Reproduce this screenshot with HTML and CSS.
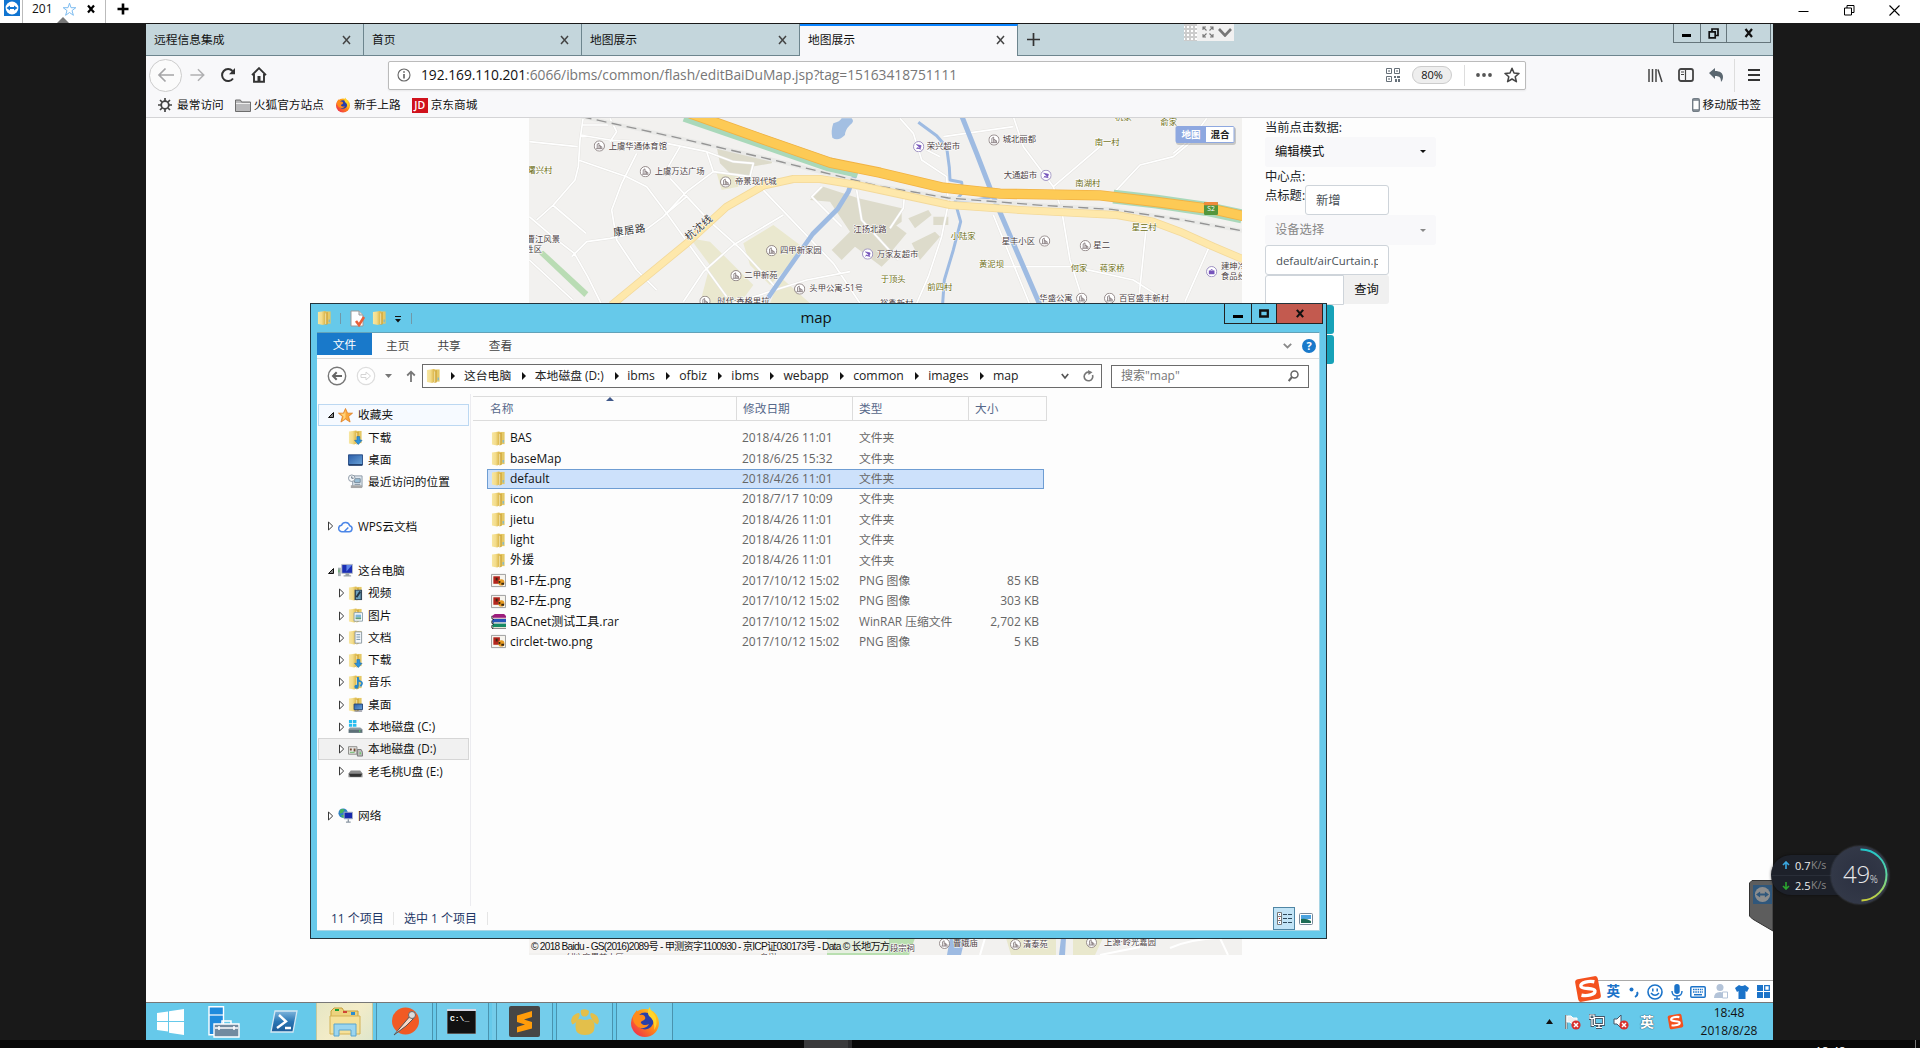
FILE: index.html
```html
<!DOCTYPE html>
<html lang="zh-CN">
<head>
<meta charset="utf-8">
<title>201</title>
<link rel="stylesheet" href="styles.css">
</head>
<body>
<svg class="defs" width="0" height="0" aria-hidden="true">
  <defs>
    <linearGradient id="fold" x1="0" x2="1"><stop offset="0" stop-color="#f7e6a2"/><stop offset=".5" stop-color="#f3dc8a"/><stop offset="1" stop-color="#d9b345"/></linearGradient>
    <linearGradient id="foldBack" x1="0" x2="1"><stop offset="0" stop-color="#e9cf77"/><stop offset="1" stop-color="#e3c763"/></linearGradient>
    <linearGradient id="blueScreen" x1="0" y1="0" x2="1" y2="1"><stop offset="0" stop-color="#2a5da9"/><stop offset="1" stop-color="#6ba4d8"/></linearGradient>
    <linearGradient id="ring" x1="0" y1="0" x2="0" y2="1"><stop offset="0" stop-color="#22c5c9"/><stop offset=".5" stop-color="#5fd6a0"/><stop offset="1" stop-color="#c8cf3a"/></linearGradient>
    <linearGradient id="fox" x1="1" y1="0" x2="0" y2="1"><stop offset="0" stop-color="#ffe226"/><stop offset=".45" stop-color="#ff8a16"/><stop offset="1" stop-color="#ec1b58"/></linearGradient>
    <linearGradient id="ps" x1="0" y1="0" x2="0" y2="1"><stop offset="0" stop-color="#7fb6dd"/><stop offset=".5" stop-color="#2a76b4"/><stop offset="1" stop-color="#1c5a96"/></linearGradient>
    <g id="roads">
      <path d="M190 20l-10 70-5 80-10 40-65 75-50 45M28 95l145 15M180 75l90 15 170 10 120 25 20 60-80 60-70 75-60 45-100 20-70 10-45 45M175 150l145 50 60 30 60 80 100 140 80 110M350 130l-45 90-30 80 15 90 60 90 60 60M28 320l70 60 65 50 40 70 40 80M98 285l100 85M480 110l-35 60M450 205l120 130 90 80 110 120M720 230l220 230 80 120M440 310l60-50M790 315l-150 90-90 80-60 90M905 230l-30 30 90 90M1010 240l15 90 110 120M28 450l130 120M640 580l220-70 130-25M560 125l80 30 60 5-10 40-110-15M185 45h80M270 25l20 40-20 30"/>
      <path d="M1140 25l40 45 25 80 75 50 5 80-20 100-40 120-35 80M1270 80l210-30M1480 20l30 90 90 120 25 70 25 150 40 125M1600 230l140-120M1780 250l80-85 100-25 60-50M1420 315l110 270M1390 470h270l180 40 110 70M2070 405l-75 170M1880 340l-25 240M1220 120l40 20M1155 235l-5 60-40 60M1960 130l60-50 40-55"/>
    </g>
    <path id="ring-road" d="M275 585l225-185 120-110 110-63 90-20h80l110 18 70 15 210 45 210 15 290 15 110 20 80 30 100 45 90 38"/>
    <path id="highway" d="M510 10l230 82 190 66 150 30 190 45 170 18 300 5 170 20 170 22 90 20"/>
    <path id="rail" d="M185 20l300 66 300 70 120 30 170 42 210 36 280 22 210 12 220 33 176 32"/>
  </defs>
  <symbol id="folder" viewBox="0 0 16 16"><path d="M7 1h7.500v13H7z" fill="url(#foldBack)"/><path d="M1 1.500 9 .5v14l-2.500 1-5.500-1z" fill="url(#fold)"/><path d="M9 2.500l2.500-.8v13L9 15.500z" fill="#d2a93c"/><path d="M9.300 3v11.500" stroke="#fbf3cf" stroke-width=".8"/><path d="M13 9.500v3" stroke="#6fb6dd" stroke-width="1.200"/></symbol>
  <symbol id="png" viewBox="0 0 16 16"><path d="M.5 1.500h15v13H.5z" fill="#f6f4ee" stroke="#9a9a9a"/><path d="M2.500 3.500h7v8h-7z" fill="#b5241c"/><circle cx="11" cy="10" r="3.300" fill="#e79a20"/><path d="M5 5h2v3H5zM8 8.500h2V11H8zm3 2h3v2h-3z" fill="#3c2a12"/></symbol>
  <symbol id="rar" viewBox="0 0 16 16"><path d="M1 2 4 0h10l2 2v3H3z" fill="#9c1d7c"/><path d="M1 7 3 5h13v5H2z" fill="#2455b8"/><path d="M1 12l2-2h13v5H3z" fill="#178a64"/><path d="M3 4.500h13M3 9.500h13M3 14.500h13" stroke="#e7e3d5" stroke-width="1.200"/><path d="M1 2v3l2 1m-2 1v3l2 1m-2 1v3l2 1h13" fill="none" stroke="#111"/></symbol>
  <symbol id="tv" viewBox="0 0 16 16"><path d="M0 0h16v16H0z" fill="#0f74d1"/><circle cx="8" cy="8" r="6.400" fill="#fff"/><path d="M2.500 8 6 5.400v1.700h4V5.400L13.500 8 10 10.600V8.900H6v1.700z" fill="#0f74d1"/></symbol>
  <symbol id="firefox" viewBox="0 0 32 32"><circle cx="16" cy="17" r="14" fill="url(#fox)"/><circle cx="16" cy="15" r="8.500" fill="#2a3fa8"/><path d="M8 4c0 3 1 4 3 5 4-1 6 2 5 4s-5 2-4 4 5 3 8 1c-2 5-10 6-14 0S4 9 8 4z" fill="#ff8b1a"/><path d="M21 1c0 4 5 6 6 11s1 8-2 12c1-7-1-11-5-14-2-3-1-7 1-9z" fill="#ffd52b"/></symbol>
  <symbol id="sogou" viewBox="0 0 28 28"><g transform="rotate(-10 14 14)"><rect x="2.500" y="2.500" width="23" height="23" rx="3" fill="#f4511e"/><path d="M21.500 8c-5-2-14-2-14 2 0 4 13 3 13 7 0 4-9 4-14 2" fill="none" stroke="#fff" stroke-width="3.400"/></g></symbol>
  <symbol id="exp" viewBox="0 0 8 10"><path d="M1.500 1v8l4.200-4z" fill="#fff" stroke="#3a3a3a"/></symbol>
  <symbol id="col" viewBox="0 0 8 10"><path d="M6.500 2.500v5H1.500z" fill="#888" stroke="#111"/></symbol>
  <symbol id="poi" viewBox="0 0 32 32"><circle cx="16" cy="16" r="14.500" fill="#fff" stroke="#877b7c" stroke-width="2.500"/><path d="M10 23V11l5-3v15m0-8h4v8m0-5h4v5M7 23.500h18" fill="none" stroke="#6f6264" stroke-width="2"/></symbol>
  <symbol id="shop" viewBox="0 0 32 32"><circle cx="16" cy="16" r="14.500" fill="#fff" stroke="#9285bb" stroke-width="2.500"/><path d="M9 10l14 3-2 7H11l12 3M9 23l5-5" fill="#7654bb" stroke="#7654bb" stroke-width="2"/></symbol>
  <symbol id="bag" viewBox="0 0 32 32"><circle cx="16" cy="16" r="14.500" fill="#fff" stroke="#9285bb" stroke-width="2.500"/><path d="M8 13h16v10H8z" fill="#7654bb"/><path d="M12 13q4-8 8 0" fill="none" stroke="#7654bb" stroke-width="2.500"/></symbol>
</svg>

<header class="host-bar">
  <svg class="host-logo" width="16" height="16"><use href="#tv"/></svg>
  <div class="host-tab"><span>201</span>
    <svg width="15" height="15" viewBox="0 0 15 15"><path d="M7.500 1.200 9 5.700h4.800L10 8.600l1.400 4.700-3.900-2.800-3.900 2.800L5 8.600 1.200 5.700H6z" fill="none" stroke="#7dbcf0"/></svg>
    <svg width="10" height="10" viewBox="0 0 10 10"><path d="M2 1.500l6 7M8 1.500l-6 7" stroke="#000" stroke-width="2.200"/></svg>
    <i class="host-notch"></i>
  </div>
  <svg class="host-plus" width="12" height="12" viewBox="0 0 12 12"><path d="M6 .5v11M.5 6h11" stroke="#000" stroke-width="2.600"/></svg>
  <div class="host-ctl">
    <svg width="11" height="11" viewBox="0 0 11 11"><path d="M.5 6.500h10" stroke="#000"/></svg>
    <svg width="11" height="11" viewBox="0 0 11 11"><path d="M.5 3h7v7h-7zM3 3V.5h7v7H7.500" fill="none" stroke="#000"/></svg>
    <svg width="11" height="11" viewBox="0 0 11 11"><path d="M.5.5l10 10M10.500.5l-10 10" stroke="#000" stroke-width="1.100"/></svg>
  </div>
</header>

<main class="stage">
<section class="remote">
  <div class="browser">
    <div class="tabs">
      <div class="tab">远程信息集成<svg class="x"><path d="M1 1l7 8M8 1L1 9"/></svg></div>
      <div class="tab">首页<svg class="x"><path d="M1 1l7 8M8 1L1 9"/></svg></div>
      <div class="tab">地图展示<svg class="x"><path d="M1 1l7 8M8 1L1 9"/></svg></div>
      <div class="tab active">地图展示<svg class="x"><path d="M1 1l7 8M8 1L1 9"/></svg></div>
      <svg class="newtab" width="13" height="13" viewBox="0 0 13 13"><path d="M6.500 0v13M0 6.500h13" stroke="#333" stroke-width="1.700"/></svg>
      <div class="wctl">
        <span class="w27"><svg width="10" height="10"><path d="M0 6h9v3H0z"/></svg></span>
        <span class="w26"><svg width="11" height="11" viewBox="0 0 11 11"><path d="M1.200 3.800h6v6h-6zM4 3V1h6v6.500H8" fill="none" stroke="#111" stroke-width="1.700"/></svg></span>
        <span class="w44"><svg width="10" height="10" viewBox="0 0 10 10"><path d="M1.500 1l6.500 8M8 1L1.500 9" stroke="#111" stroke-width="2.200"/></svg></span>
      </div>
    </div>
    <div class="nav">
      <span class="back"><svg width="18" height="18" viewBox="0 0 18 18"><path d="M17 9H2m6.500-6.500L2 9l6.500 6.500" fill="none" stroke="#a5a5a7" stroke-width="1.700"/></svg></span>
      <svg class="fwd" width="17" height="16" viewBox="0 0 18 18"><path d="M1 9h15M9.500 2.500 16 9l-6.500 6.500" fill="none" stroke="#b0b0b2" stroke-width="1.700"/></svg>
      <svg class="reload" width="16" height="16" viewBox="0 0 16 16"><path d="M13 11.500A6 6 0 1 1 12.500 4" fill="none" stroke="#333" stroke-width="2"/><path d="M15 1v6.200H9z" fill="#333"/></svg>
      <svg class="home" width="16" height="16" viewBox="0 0 16 16"><path d="M1 8.200 8 1.200l7 7M3 7v7.700h10V7" fill="none" stroke="#333" stroke-width="1.900"/><path d="M6.500 9h3v5.500h-3z" fill="#333"/></svg>
      <div class="url">
        <svg width="14" height="14" viewBox="0 0 14 14"><circle cx="7" cy="7" r="6" fill="none" stroke="#666" stroke-width="1.100"/><path d="M7 6v4.500M7 3.300v1.500" stroke="#555" stroke-width="1.500"/></svg>
        <p><b>192.169.110.201</b>:6066/ibms/common/flash/editBaiDuMap.jsp?tag=15163418751111</p>
        <svg class="qr" width="14" height="14" viewBox="0 0 14 14"><path d="M.5.500h5v5h-5zM8.500.5h5v5h-5zM.5 8.500h5v5h-5z" fill="none" stroke="#667079"/><path d="M2.300 2.300h1.500v1.500H2.300zM10.300 2.300h1.500v1.500h-1.500zM2.300 10.300h1.500v1.500H2.300zM8 8h2v2H8zM11 8h3v2h-3zM9 11h2v3H9zM12 11h2v3h-2z" fill="#667079"/></svg>
        <span class="pill">80%</span>
        <i class="vline"></i>
        <svg class="dots" width="16" height="4"><circle cx="2" cy="2" r="1.900"/><circle cx="8" cy="2" r="1.900"/><circle cx="14" cy="2" r="1.900"/></svg>
        <svg width="16" height="16" viewBox="0 0 16 16"><path d="M8 1.200 10 6l5 .4-3.800 3.300 1.200 5L8 12l-4.400 2.700 1.200-5L1 6.400 6 6z" fill="none" stroke="#444" stroke-width="1.500" stroke-linejoin="round"/></svg>
      </div>
      <div class="tools">
        <svg width="16" height="15" viewBox="0 0 16 15"><path d="M2 1v13M5.500 1v13M9 1v13M11 1.500 15 14" stroke="#444" stroke-width="1.500"/></svg>
        <svg width="16" height="14" viewBox="0 0 16 14"><rect x="1" y="1" width="14" height="12" rx="2" fill="none" stroke="#444" stroke-width="1.800"/><path d="M7.500 1v12M3 4h3M3 6.500h3" stroke="#444" stroke-width="1.200"/></svg>
        <svg width="15" height="14" viewBox="0 0 15 14"><path d="M0 5 6 0v3c5 0 8 2 8 6 0 2-1 4-2 5 0-4-1-6-6-6v3z" fill="#5b6770"/></svg>
        <i class="vline tall"></i>
        <svg width="12" height="12" viewBox="0 0 12 12"><path d="M0 1h12M0 6h12M0 11h12" stroke="#333" stroke-width="1.800"/></svg>
      </div>
    </div>
    <div class="marks">
      <svg width="14" height="14" viewBox="0 0 14 14"><circle cx="7" cy="7" r="3.800" fill="none" stroke="#444" stroke-width="1.800"/><path d="M7 0v3M7 11v3M0 7h3M11 7h3M2 2l2 2M10 10l2 2M12 2l-2 2M4 10l-2 2" stroke="#444" stroke-width="1.700"/></svg>
      <span class="m1">最常访问</span>
      <svg width="16" height="13" viewBox="0 0 16 13"><path d="M.5 12.500V1h5l1 2h9v9.500z" fill="#b9b9bb" stroke="#6d6d6d"/><path d="M1 4.500h14" stroke="#eee"/></svg>
      <span class="m2">火狐官方站点</span>
      <svg width="16" height="16"><use href="#firefox"/></svg>
      <span class="m4">新手上路</span>
      <span class="jd">JD</span>
      <span class="m3">京东商城</span>
      <svg class="phone" width="8" height="14" viewBox="0 0 8 14"><rect x=".7" y=".7" width="6.600" height="12.600" rx="1.200" fill="#fff" stroke="#737d86" stroke-width="1.400"/><path d="M1 2h6M1 12h6" stroke="#737d86" stroke-width="1.500"/></svg>
      <span>移动版书签</span>
    </div>

    <div class="page">
      <svg class="map" width="713" height="837" viewBox="529 118 713 837">
        <rect x="529" y="118" width="713" height="837" fill="#f2f1ef"/>
        <g transform="translate(520 110) scale(.33333)">
          <g fill="#dddbcb">
            <path d="M590 110l170 35-5 15-60 10-5 30-60-10-30-30zM910 230l105 35 130 30v40l-70 50 50 45-40 40-80-60-40 40-30-30 55-55-60-90-60-5zM1080 290l60 10-20 40 40 30-50 60-30-20zM1165 325l60-25 10 15-50 40zM1240 320h45v25h-45zM1175 400l70-35 15 15-60 70z"/>
          </g>
          <g fill="#eae8cf">
            <path d="M510 385l60 10 130 130-40 55H540l30-115zM670 400l90-55 80 60-20 50-70 70-60-60zM590 190h65v40l-50 10zM780 500l90 80h-120z"/>
          </g>
          <path d="M55 430l15-8 135 125-12 14z" fill="#b9dcb4"/>
          <use href="#roads" class="road-edge"/>
          <use href="#roads" class="road-core"/>
          <g fill="none" stroke="#9ebbe2" stroke-linejoin="round">
            <path d="M1008 185l-23 60-32 52-75 75-95 135-48 70" stroke-width="14"/>
            <path d="M1195 37l55 40 30 35 8 60 2 38 35 7 3 30-23 28 17 60-22 85-27 90-5 70" stroke-width="9"/>
            <path d="M1310 270h60l48-10" stroke-width="9"/>
            <path d="M1324 15l46 115 50 130 60 140 80 185" stroke-width="15"/>
          </g>
          <path d="M940 40q20-5 25-15h30q10 10-5 20-15 15-15 30-20 20-38 8-5-20 3-43z" fill="#a3bfe2"/>
          <use href="#rail" class="rail-bed"/>
          <use href="#rail" class="rail-dash"/>
          <path d="M495 15l240 82 190 66 90 20M1780 260l130 15 150 22 106 22" fill="none" stroke="#a9d8ba" stroke-width="42"/>
          <use href="#ring-road" class="ring-edge"/>
          <use href="#ring-road" class="ring-core"/>
          <use href="#highway" class="hw-edge"/>
          <use href="#highway" class="hw-core"/>
          <g class="lbl">
            <text x="266" y="116">上虞华通体育馆</text><text x="404" y="193">上虞万达广场</text><text x="645" y="223">帝景现代城</text><text x="780" y="430">四甲新家园</text><text x="673" y="505">二甲新苑</text><text x="868" y="543">头甲公寓-51号</text><text x="592" y="583">时代·香格里拉</text><text x="1000" y="365">江扬北路</text><text x="1070" y="441">万家友超市</text><text x="20" y="395">曹江风景</text><text x="16" y="425">胜区</text><text x="1080" y="588">裕鑫新村</text>
            <text x="1220" y="118">荣兴超市</text><text x="1448" y="97">城北丽都</text><text x="1451" y="205">大通超市</text><text x="1445" y="401">星丰小区</text><text x="1720" y="415">星二</text><text x="1558" y="572">华盛公寓</text><text x="1797" y="572">百官盛丰新村</text><text x="2103" y="477">建坤冷</text><text x="2103" y="507">食品经</text>
          </g>
          <g class="lbl village">
            <text x="22" y="190">曙兴村</text><text x="1082" y="515">于顶头</text><text x="1292" y="386">小陆家</text><text x="1377" y="470">黄泥坝</text><text x="1222" y="539">前四村</text><text x="1724" y="104">南一村</text><text x="1666" y="228">南湖村</text><text x="1835" y="361">星三村</text><text x="1652" y="484">何家</text><text x="1739" y="482">蒋家桥</text><text x="1785" y="31">杭家</text><text x="1921" y="45">俞家</text>
          </g>
          <g class="lbl street"><text transform="translate(281 378) rotate(-8)">康居路</text><text transform="translate(506 393) rotate(-41)">杭沈线</text></g>
          <g>
            <use href="#poi" x="221" y="91" width="34" height="34"/><use href="#poi" x="359" y="168" width="34" height="34"/><use href="#poi" x="600" y="199" width="34" height="34"/><use href="#poi" x="738" y="405" width="34" height="34"/><use href="#poi" x="631" y="480" width="34" height="34"/><use href="#poi" x="822" y="520" width="34" height="34"/><use href="#poi" x="538" y="557" width="34" height="34"/>
            <use href="#poi" x="1405" y="73" width="34" height="34"/><use href="#poi" x="1557" y="376" width="34" height="34"/><use href="#poi" x="1679" y="390" width="34" height="34"/><use href="#poi" x="1668" y="548" width="34" height="34"/><use href="#poi" x="1752" y="548" width="34" height="34"/>
            <use href="#shop" x="1026" y="415" width="34" height="34"/><use href="#shop" x="1179" y="93" width="34" height="34"/><use href="#shop" x="1561" y="179" width="34" height="34"/><use href="#bag" x="2058" y="468" width="34" height="34"/>
          </g>
          <rect x="2052" y="276" width="42" height="39" rx="4" fill="#53963c"/><path d="M2052 286v-6q0-4 4-4h34q4 0 4 4v6z" fill="#f08a3c"/><text x="2073" y="303" class="shield">S2</text>
        </g>
        <g>
          <path d="M827 938h88l-6 17h-82z" fill="#b9dfb0"/><path d="M1006 938h50v17h-45zM1073 938h30l-8 17h-22z" fill="#e9e8cd"/>
          <path d="M950 938h15l-4 17h-14zM1061 938h5l-1 17h-6z" fill="#9ebbe2"/>
          <path d="M985 938l-5 17M1170 948q20-9 50-10l8 17M1100 955l40-8" fill="none" stroke="#fff" stroke-width="2"/>
          <g class="lbl small"><text x="953" y="946">曹娥庙</text><text x="1023" y="947">清泰苑</text><text x="1104" y="945">上源·岭光嘉园</text><text x="890" y="951">段宗祠</text><text x="567" y="960">(北) 麻果兹小区</text><text x="760" y="960">乌树</text></g>
          <use href="#poi" x="939" y="938" width="11" height="11"/><use href="#poi" x="1010" y="939" width="11" height="11"/><use href="#poi" x="1086" y="937" width="11" height="11"/>
        </g>
        <rect x="529" y="938" width="360" height="15" fill="#f6f5f3" opacity=".72"/>
        <text x="531" y="950" class="copy" textLength="359">© 2018 Baidu - GS(2016)2089号 - 甲测资字1100930 - 京ICP证030173号 - Data © 长地万方</text>
        <g><rect x="1176" y="127" width="60" height="18" rx="3" fill="#777" opacity=".35"/><rect x="1175.500" y="126" width="59" height="17" rx="2" fill="#8ea8e0"/><rect x="1206" y="127" width="27.500" height="15" fill="#fff"/><text x="1181.500" y="138" class="mt on">地图</text><text x="1210.500" y="138" class="mt">混合</text></g>
      </svg>
      <form class="panel">
        <label class="l1">当前点击数据:</label>
        <div class="sel">编辑模式<i></i></div>
        <label class="l2">中心点:</label>
        <div class="row"><label>点标题:</label><div class="inp short">新增</div></div>
        <div class="sel off">设备选择<i></i></div>
        <div class="inp wide"><span>default/airCurtain.png</span></div>
        <div class="row"><div class="inp q"></div><div class="btn">查询</div></div>
        <div class="teal"></div><div class="teal"></div>
      </form>
    </div>
  </div>

  <div class="session">
    <i class="grip"></i>
    <svg width="12" height="12" viewBox="0 0 12 12"><path d="M1 4V1h3M1 1l3.500 3.500M8 1h3v3M11 1 7.500 4.500M1 8v3h3M1 11l3.500-3.500M11 8v3H8M11 11 7.500 7.500" fill="none" stroke="#777" stroke-width="1.100"/></svg>
    <svg width="14" height="9" viewBox="0 0 14 9"><path d="M1 1l6 6.500L13 1" fill="none" stroke="#777" stroke-width="2.600"/></svg>
  </div>

  <div class="explorer">
    <div class="titlebar">
      <svg width="15" height="16"><use href="#folder"/></svg><i class="tsep"></i>
      <svg class="chk" width="16" height="17" viewBox="0 0 16 17"><path d="M1 1h8l4 4v11H1z" fill="#fff" stroke="#999"/><path d="M9 1v4h4" fill="#ddd" stroke="#999"/><path d="M6 11l3 4 5-8" fill="none" stroke="#e8603a" stroke-width="2.600"/></svg>
      <svg class="f2" width="15" height="16"><use href="#folder"/></svg>
      <svg class="drop" width="8" height="7" viewBox="0 0 8 7"><path d="M1 .5h6" stroke="#111"/><path d="M1 3h6L4 6.500z" fill="#111"/></svg><i class="tsep t2"></i>
      <h1>map</h1>
      <div class="ectl">
        <span class="w28"><svg width="10" height="10"><path d="M0 6h10v3H0z"/></svg></span>
        <span class="w25"><svg width="10" height="9" viewBox="0 0 10 9"><path d="M1.200 1.500h7.600v6H1.200z" fill="none" stroke="#111" stroke-width="2.300"/></svg></span>
        <span class="w45"><svg width="10" height="9" viewBox="0 0 10 10"><path d="M1.500 1l7 8M8.500 1l-7 8" stroke="#111" stroke-width="2.400"/></svg></span>
      </div>
    </div>
    <div class="body">
      <div class="ribbon"><span class="file">文件</span><span>主页</span><span>共享</span><span>查看</span>
        <svg class="rch" width="9" height="6" viewBox="0 0 9 6"><path d="M.8.800 4.500 4.500 8.200.8" fill="none" stroke="#8a8a8a" stroke-width="1.800"/></svg><b class="help">?</b></div>
      <div class="address">
        <svg class="bk" width="20" height="20" viewBox="0 0 20 20"><circle cx="10" cy="10" r="8.700" fill="#fff" stroke="#777" stroke-width="1.400"/><path d="M15 10H6m3.700-3.800L6 10l3.700 3.800" fill="none" stroke="#666" stroke-width="2"/></svg>
        <svg class="fw" width="20" height="20" viewBox="0 0 20 20"><circle cx="10" cy="10" r="8.700" fill="#fff" stroke="#ddd" stroke-width="1.200"/><path d="M5 8.500h5V6l4.500 4-4.500 4v-2.500H5z" fill="none" stroke="#d5d5d5"/></svg>
        <svg class="dd" width="7" height="4"><path d="M0 0h7L3.500 4z" fill="#777"/></svg>
        <svg class="up" width="10" height="12" viewBox="0 0 10 12"><path d="M5 12V2M1.200 5.500 5 1.700l3.800 3.800" fill="none" stroke="#777" stroke-width="1.800"/></svg>
        <div class="crumbs"><svg width="15" height="16"><use href="#folder"/></svg><i></i><span class="cn">这台电脑</span><i></i><span class="cn">本地磁盘 (D:)</span><i></i><span>ibms</span><i></i><span>ofbiz</span><i></i><span>ibms</span><i></i><span>webapp</span><i></i><span>common</span><i></i><span>images</span><i></i><span>map</span>
          <svg class="cch" width="8" height="7" viewBox="0 0 8 7"><path d="M.8 1 4 5 7.200 1" fill="none" stroke="#555" stroke-width="1.700"/></svg>
          <svg width="11" height="12" viewBox="0 0 11 12"><path d="M9.500 5A4.300 4.300 0 1 1 6 2.200" fill="none" stroke="#777" stroke-width="1.600"/><path d="M5 0l4.500 2.300L5.500 5z" fill="#777"/></svg>
        </div>
        <div class="search">搜索"map"<svg width="11" height="12" viewBox="0 0 11 12"><circle cx="6.500" cy="4.500" r="3.500" fill="none" stroke="#666" stroke-width="1.500"/><path d="M4 7 .7 11" stroke="#666" stroke-width="2"/></svg></div>
      </div>
      <div class="panes">
        <ul class="tree">
          <li class="fav"><svg class="a"><use href="#col"/></svg><svg class="i" viewBox="0 0 16 16"><path d="M8 .5l2.200 5h5.300l-4.200 3.500 1.600 6L8 11.800 3.100 15l1.600-6L.5 5.500h5.300z" fill="#fba73a" stroke="#dc7b1d" stroke-width=".8"/><path d="M8 2.500v8L5 13l1-4-3-3h3.500z" fill="#ffd27a"/></svg>收藏夹</li>
          <li class="s"><svg class="i" viewBox="0 0 16 16"><use href="#folder"/><path d="M9.500 7h3v4H15l-4 4.500L7 11h2.500z" fill="#2c93dd" stroke="#1767a8" stroke-width=".6"/></svg>下载</li>
          <li class="s"><svg class="i" viewBox="0 0 16 16"><path d="M.5 3h15v11H.5z" fill="url(#blueScreen)" stroke="#264a82"/><path d="M1 13h14v1.500H1z" fill="#1b355f"/></svg>桌面</li>
          <li class="s"><svg class="i" viewBox="0 0 16 16"><path d="M5 2h10v12H5z" fill="#dfe7ee" stroke="#8b98a4"/><path d="M7 5h6v4H7zM7 11h6" fill="#9ac0d8" stroke="#76899a"/><path d="M3 12h12v3H3z" fill="#a7a7a7"/><circle cx="4" cy="4.500" r="3.500" fill="#f5f7f9" stroke="#8b98a4"/><path d="M4 2.500v2h2" fill="none" stroke="#567"/></svg>最近访问的位置</li>
          <li class="gap"></li>
          <li><svg class="a"><use href="#exp"/></svg><svg class="i" viewBox="0 0 16 16"><path d="M4.500 13.500h7a3.200 3.200 0 0 0 1-6.300A4.600 4.600 0 0 0 3.800 6.700a3.400 3.400 0 0 0 .7 6.800zM7 13l4-4" fill="none" stroke="#4b86e8" stroke-width="1.600"/></svg>WPS云文档</li>
          <li class="gap"></li>
          <li><svg class="a"><use href="#col"/></svg><svg class="i" viewBox="0 0 16 16"><path d="M0 5h3v9H0z" fill="#a9b2b5"/><path d="M1 7v3" stroke="#4aaf52"/><path d="M4 1.500h11.500V11H4z" fill="#1b2fb4" stroke="#b9bfc6"/><path d="M9 2h6L9 9z" fill="#5f86ea"/><path d="M8 11h4v2h2v1.500H6V13h2z" fill="#9ba3a8"/></svg>这台电脑</li>
          <li class="s"><svg class="a"><use href="#exp"/></svg><svg class="i" viewBox="0 0 16 16"><use href="#folder"/><path d="M7 4h8v11H7z" fill="#34495b"/><path d="M8.500 5h5v9h-5z" fill="#6da2bd"/><path d="M9 12l4-6" stroke="#263746" stroke-width="2"/></svg>视频</li>
          <li class="s"><svg class="a"><use href="#exp"/></svg><svg class="i" viewBox="0 0 16 16"><use href="#folder"/><path d="M6.500 5h9v9h-9z" fill="#fff" stroke="#8ba0ad"/><path d="M8 7h6v3H8z" fill="#7bb6dc"/><path d="M8 10h6v2H8z" fill="#5e9d79"/></svg>图片</li>
          <li class="s"><svg class="a"><use href="#exp"/></svg><svg class="i" viewBox="0 0 16 16"><use href="#folder"/><path d="M7.500 2h7v12h-7z" fill="#f5f8fb" stroke="#8d9ba7"/><path d="M9 5h4M9 7.500h4M9 10h4" stroke="#6b8ea8"/></svg>文档</li>
          <li class="s"><svg class="a"><use href="#exp"/></svg><svg class="i" viewBox="0 0 16 16"><use href="#folder"/><path d="M9.500 7h3v4H15l-4 4.500L7 11h2.500z" fill="#2c93dd" stroke="#1767a8" stroke-width=".6"/></svg>下载</li>
          <li class="s"><svg class="a"><use href="#exp"/></svg><svg class="i" viewBox="0 0 16 16"><use href="#folder"/><path d="M10.500 12V2q0 4 3 5t0 5" fill="none" stroke="#2686ca" stroke-width="1.800"/><circle cx="9" cy="12.500" r="2.200" fill="#2686ca"/></svg>音乐</li>
          <li class="s"><svg class="a"><use href="#exp"/></svg><svg class="i" viewBox="0 0 16 16"><use href="#folder"/><path d="M6.500 7.500h9v6h-9z" fill="url(#blueScreen)" stroke="#234579"/><path d="M7 15h8" stroke="#667"/></svg>桌面</li>
          <li class="s"><svg class="a"><use href="#exp"/></svg><svg class="i" viewBox="0 0 16 16"><path d="M1 1h3.500v3.500H1zM5.300 1H9v3.500H5.300zM1 5.300h3.500v3H1zM5.300 5.300H9v3H5.300z" fill="#28bdf0"/><path d="M2 9h11l2.500 2v4H.5v-4z" fill="#8f9ba3"/><path d="M1 11.500h14v3H1z" fill="#5d7078"/><path d="M12.500 12v2" stroke="#57da62"/></svg>本地磁盘 (C:)</li>
          <li class="s cur"><svg class="a"><use href="#exp"/></svg><svg class="i" viewBox="0 0 16 16"><path d="M.5 5h9v8h-9z" fill="#e5e5e2" stroke="#8a8a86"/><path d="M2 7h2v2H2zM6 7h2v3H6z" fill="#734b36"/><path d="M2 11h5" stroke="#65b765"/><path d="M10 8h4l1.500 3v4H10z" fill="#b9bbb9" stroke="#777"/><path d="M13 11v2" stroke="#4d4"/></svg>本地磁盘 (D:)</li>
          <li class="s"><svg class="a"><use href="#exp"/></svg><svg class="i" viewBox="0 0 16 16"><path d="M3 7h10l2.500 3v4h-15v-4z" fill="#8b8b8b"/><path d="M1 10.500h14l-1.500 3h-11z" fill="#333"/></svg>老毛桃U盘 (E:)</li>
          <li class="gap"></li>
          <li><svg class="a"><use href="#exp"/></svg><svg class="i" viewBox="0 0 16 16"><circle cx="5.500" cy="5.500" r="5" fill="#2f7fc8"/><path d="M2 2q3-2 5 0L5 5 2 6zM3 8l4-1 1 3-3 .5z" fill="#48b55b"/><path d="M6.500 4.500h9v7h-9z" fill="#1729ac" stroke="#a9b2c4"/><path d="M11 12v2.500M8.500 15h5" stroke="#8c98a4" stroke-width="1.400"/></svg>网络</li>
        </ul>
        <div class="files">
          <div class="r head"><span>名称</span><span>修改日期</span><span>类型</span><span>大小</span><i class="sort"></i></div>
          <div class="list">
          <div class="r"><span><svg><use href="#folder"/></svg>BAS</span><span>2018/4/26 11:01</span><span>文件夹</span><span></span></div>
          <div class="r"><span><svg><use href="#folder"/></svg>baseMap</span><span>2018/6/25 15:32</span><span>文件夹</span><span></span></div>
          <div class="r on"><span><svg><use href="#folder"/></svg>default</span><span>2018/4/26 11:01</span><span>文件夹</span><span></span></div>
          <div class="r"><span><svg><use href="#folder"/></svg>icon</span><span>2018/7/17 10:09</span><span>文件夹</span><span></span></div>
          <div class="r"><span><svg><use href="#folder"/></svg>jietu</span><span>2018/4/26 11:01</span><span>文件夹</span><span></span></div>
          <div class="r"><span><svg><use href="#folder"/></svg>light</span><span>2018/4/26 11:01</span><span>文件夹</span><span></span></div>
          <div class="r"><span><svg><use href="#folder"/></svg>外援</span><span>2018/4/26 11:01</span><span>文件夹</span><span></span></div>
          <div class="r"><span><svg><use href="#png"/></svg>B1-F左.png</span><span>2017/10/12 15:02</span><span>PNG 图像</span><span>85 KB</span></div>
          <div class="r"><span><svg><use href="#png"/></svg>B2-F左.png</span><span>2017/10/12 15:02</span><span>PNG 图像</span><span>303 KB</span></div>
          <div class="r"><span><svg><use href="#rar"/></svg>BACnet测试工具.rar</span><span>2017/10/12 15:02</span><span>WinRAR 压缩文件</span><span>2,702 KB</span></div>
          <div class="r"><span><svg><use href="#png"/></svg>circlet-two.png</span><span>2017/10/12 15:02</span><span>PNG 图像</span><span>5 KB</span></div>
          </div>
        </div>
      </div>
      <div class="status"><span class="s1">11 个项目</span><span class="s2">选中 1 个项目</span>
        <b class="view"><svg width="15" height="13" viewBox="0 0 15 13"><path d="M.5.500h4v12h-4zM.5 4.500h4M.5 8.500h4" fill="#fff" stroke="#777"/><path d="M2 2h1v1H2zM2 10h1v1H2z" fill="#37c"/><path d="M2 6h1v1H2z" fill="#c33"/><path d="M6 2.500h4M11 2.500h4M6 6.500h4M11 6.500h4M6 10.500h4M11 10.500h4" stroke="#2e4a5c"/></svg></b>
        <svg class="thumb" width="14" height="12" viewBox="0 0 14 12"><rect x=".5" y=".5" width="13" height="11" rx="1" fill="#fff" stroke="#789"/><path d="M2 2h10v4H2z" fill="#4ba3df"/><path d="M2 6q5-1 10 2v2H2z" fill="#1f6d56"/></svg></div>
    </div>
  </div>

  <div class="sidetab"><svg width="24" height="52" viewBox="0 0 24 52"><path d="M3 .5h21V51L3.500 39 .5 36V3z" fill="#5d5d5d" stroke="#333"/><g opacity=".6"><use href="#tv" x="4" y="5" width="19" height="19"/></g><path d="M4 5h19v19H4z" fill="#333" opacity=".35"/></svg></div>

  <div class="ime">
    <svg class="big" width="28" height="28"><use href="#sogou"/></svg>
    <b>英</b>
    <svg width="10" height="12" viewBox="0 0 10 12"><circle cx="2.500" cy="3.500" r="2" fill="#1b73c9"/><path d="M8 6q1.500 3-2 5" stroke="#1b73c9" stroke-width="2" fill="none"/></svg>
    <svg width="16" height="16" viewBox="0 0 16 16"><circle cx="8" cy="8" r="7" fill="none" stroke="#1b73c9" stroke-width="1.600"/><path d="M5.800 4.500v3M10.200 4.500v3M4 9q4 4.500 8 0" fill="none" stroke="#1b73c9" stroke-width="1.500"/></svg>
    <svg width="12" height="16" viewBox="0 0 12 16"><rect x="3.300" y="0" width="5.400" height="10" rx="2.700" fill="#1b73c9"/><path d="M1 7q0 5 5 5t5-5M6 12v3M3 15h6" fill="none" stroke="#1b73c9" stroke-width="1.400"/></svg>
    <svg width="16" height="12" viewBox="0 0 16 12"><rect x=".8" y=".8" width="14.400" height="10.400" rx="1" fill="none" stroke="#1b73c9" stroke-width="1.500"/><path d="M3 3.500h10M3 6h10" stroke="#1b73c9" stroke-width="1.600" stroke-dasharray="1.500 .8"/><path d="M4 8.700h8" stroke="#1b73c9" stroke-width="1.500"/></svg>
    <svg width="14" height="15" viewBox="0 0 14 15"><circle cx="6" cy="3.500" r="3.500" fill="#b3c3d8"/><path d="M0 14q0-6 6-6t6 6z" fill="#b3c3d8"/><path d="M8.500 8h5v6h-5z" fill="#fff" stroke="#b3c3d8"/></svg>
    <svg width="14" height="14" viewBox="0 0 14 14"><path d="M4 0q3 2 6 0l4 3-2 4-1.500-1v8h-7V6L2 7 0 3z" fill="#1b73c9"/></svg>
    <svg width="13" height="13" viewBox="0 0 13 13"><path d="M0 0h6v6H0zM0 7h6v6H0zM7 7h6v6H7z" fill="#1b73c9"/><path d="M7.700.700h4.600v4.600H7.700z" fill="none" stroke="#1b73c9" stroke-width="1.300"/></svg>
  </div>

  <footer class="taskbar">
    <span class="t plain p1"><svg width="27" height="26" viewBox="0 0 27 26"><path d="M0 4l11-1.600V12H0zM12 2.200 27 0v12H12zM0 13h11v9.500L0 21zM12 13h15v13l-15-2.200z" fill="#fff"/></svg></span>
    <span class="t plain p2"><svg width="32" height="32" viewBox="0 0 32 32"><path d="M1 .7h14.500v28H1z" fill="#1f8bdd" stroke="#fff" stroke-width="1.400"/><path d="M1 9h14" stroke="#fff" stroke-width="1.200"/><path d="M6 18h25v13H6z" fill="#728ba0" stroke="#fff" stroke-width="1.400"/><path d="M14 18v-3h9v3M7 22h23M11 20v4M26 20v4" fill="none" stroke="#fff" stroke-width="1.500"/></svg></span>
    <span class="t plain p3"><svg width="28" height="24" viewBox="0 0 28 24"><path d="M5 1h22l-4 21H1z" fill="url(#ps)" stroke="#d4e7f3" stroke-width="1.300"/><path d="M9 5l7 6.500L7 18M15 18h6" fill="none" stroke="#fff" stroke-width="2.400"/></svg></span>
    <span class="t act"><svg width="32" height="30" viewBox="0 0 32 30"><path d="M2 4l3-3h8l2 3h14v6H2z" fill="#edd27d" stroke="#c69f3b"/><path d="M6 2h4v2H6z" fill="#16a034"/><path d="M14 4h4v2h-4z" fill="#d04535"/><path d="M22 5h4v3h-4z" fill="#2a8cd0"/><path d="M1 9h30v18H1z" fill="#f6e199" stroke="#d3b256"/><path d="M5 29V17h22v12h-5v-6H10v6z" fill="#9bd5ef" stroke="#5ba5cf"/></svg></span>
    <span class="t"><svg width="28" height="30" viewBox="0 0 28 30"><circle cx="14.500" cy="14" r="13.500" fill="#f15a24"/><path d="M3 28 14 15l6-7 3 3-8 8z" fill="#f7d7c8" stroke="#555" stroke-width="1"/><circle cx="21" cy="8" r="3.500" fill="#ddd" stroke="#666"/></svg></span>
    <span class="t narrow"><svg width="29" height="25" viewBox="0 0 29 25"><path d="M0 0h29v25H0z" fill="#111" stroke="#999"/><path d="M0 0h29v2H0z" fill="#d9d9e5"/><text x="3" y="12" class="cmd">C:\_</text></svg></span>
    <span class="t edge"></span>
    <span class="t"><svg width="31" height="31" viewBox="0 0 31 31"><rect width="31" height="31" rx="2" fill="#464646"/><path d="M8 9.500l15-4.500v6l-8 2.500 8 2.500v6.500L8 26.500v-5.500l8-2.500-8-2.500z" fill="#ff9c0a"/></svg></span>
    <span class="t"><svg width="28" height="26" viewBox="0 0 28 26"><path d="M0 12Q1 5 8 4q2 2-2 8-3 4-5 3zM28 12Q27 5 20 4q-2 2 2 8 3 4 5 3z" fill="#e3bf4b"/><path d="M10 1q5-2 8 1 0 4-3 5.500h-3Q9 6 10 1z" fill="#e3bf4b"/><path d="M4.500 18q0-9 5-8 5 2 9 0 5 0 5 8t-9.500 8-9.500-8z" fill="#e3bf4b"/></svg></span>
    <span class="t"><svg width="32" height="32"><use href="#firefox"/></svg></span>
    <div class="tray">
      <svg width="7" height="5"><path d="M0 5h7L3.500 0z" fill="#111"/></svg>
      <svg width="16" height="16" viewBox="0 0 16 16"><path d="M1 1v14" stroke="#444" stroke-width="2.600"/><path d="M1.200 1v14M2 2h4l2 2h4v6H7L5 8H2z" stroke="#fff" fill="#eee"/><circle cx="11" cy="11" r="4.600" fill="#d8312e"/><path d="M9 9l4 4M13 9l-4 4" stroke="#fff" stroke-width="1.500"/></svg>
      <svg width="16" height="16" viewBox="0 0 16 16"><path d="M5.500 3.500h9v7h-9zM7 13.500h6M10 11v2M1 1h4v3.500H1zM3 4.500v7h2" fill="none" stroke="#456" stroke-width="2.800"/><path d="M5.500 3.500h9v7h-9zM7 13.500h6M10 11v2M1 1h4v3.500H1zM3 4.500v7h2" fill="none" stroke="#fff" stroke-width="1.200"/></svg>
      <svg width="16" height="16" viewBox="0 0 16 16"><path d="M1 5h3l4-4v13l-4-4H1z" fill="#fff" stroke="#456"/><circle cx="11" cy="11" r="4.600" fill="#d8312e"/><path d="M9 9l4 4M13 9l-4 4" stroke="#fff" stroke-width="1.500"/></svg>
      <b>英</b>
      <svg width="17" height="17"><use href="#sogou"/></svg>
      <div class="clock"><span>18:48</span><span>2018/8/28</span></div>
    </div>
  </footer>
</section>
</main>

<footer class="host-foot"><i class="hf-app"></i><div class="hf-clock">18:48</div><i class="hf-line"></i></footer>

<div class="meter">
  <div class="rates"><p><svg width="8" height="8" viewBox="0 0 8 8"><path d="M4 8V1M1 4l3-3 3 3" fill="none" stroke="#3aa7e0" stroke-width="1.600"/></svg><b>0.7</b>K/s</p><p><svg width="8" height="8" viewBox="0 0 8 8"><path d="M4 0v7M1 4l3 3 3-3" fill="none" stroke="#2ba52f" stroke-width="1.600"/></svg><b>2.5</b>K/s</p></div>
  <div class="dial"><svg width="58" height="58" viewBox="0 0 58 58"><path d="M29.500 3.500A25.500 25.500 0 0 1 30.500 54.500" fill="none" stroke="url(#ring)" stroke-width="2"/></svg><span>49<small>%</small></span></div>
</div>
</body>
</html>
```

FILE: styles.css
```css
* { box-sizing: border-box; }
body { margin: 0; width: 1920px; height: 1048px; overflow: hidden; position: relative; display: flex; flex-direction: column; background: #191919; font: 12px/1 "Open Sans", "Noto Sans CJK SC", sans-serif; color: #111; }
p, h1, ul { margin: 0; padding: 0; list-style: none; }
svg { display: block; flex: none; }
.defs { position: absolute; }

/* host window */
.host-bar { height: 23px; flex: none; background: #fff; display: flex; align-items: flex-start; }
.host-logo { margin: 0 0 0 4px; }
.host-tab { position: relative; margin-left: 2px; width: 84px; height: 23px; border-left: 1px solid #bbb; border-right: 1px solid #bbb; display: flex; align-items: center; padding: 0 9px 5px 9px; }
.host-tab span { width: 31px; }
.host-tab svg:nth-of-type(2) { margin-left: 9px; }
.host-notch { position: absolute; left: 34px; bottom: 0; border: 6px solid transparent; border-top: 0; border-bottom-color: #777; }
.host-plus { margin: 3px 0 0 11px; }
.host-ctl { margin-left: auto; display: flex; gap: 34.500px; padding: 5px 20px 0 0; }
.stage { height: 1017px; flex: none; padding: 1px 0 0 146px; }
.remote { position: relative; width: 1627px; height: 1016px; display: flex; flex-direction: column; background: #fdfdfd; overflow: hidden; }
.host-foot { height: 8px; background: #080808; display: flex; overflow: hidden; }
.hf-app { width: 48px; margin-left: 804px; background: #3a3a3c; border-right: 4px solid #2a2a2c; }
.hf-clock { margin-left: 963px; color: #fff; line-height: 20px; height: 20px; padding-top: 2px; width: 33px; white-space: nowrap; }
.hf-line { width: 1px; margin-left: 67px; background: #777; }

/* browser */
.browser { height: 978px; display: flex; flex-direction: column; }
.tabs { height: 32px; background: #c4d6dc; border-bottom: 1px solid #6d858e; display: flex; align-items: center; }
.tab { width: 218px; height: 32px; align-self: flex-start; border-right: 1px solid #6d858e; display: flex; align-items: center; justify-content: space-between; padding: 0 12px 0 8px; font-size: 11.750px; }
.tab.active { background: #f8f8fa; border-top: 2px solid #0a84ff; padding-bottom: 2px; }
.x { width: 9px; height: 10px; fill: none; stroke: #444; stroke-width: 1.500; }
.newtab { margin-left: 9px; }
.wctl { margin: 0 2px 0 auto; align-self: flex-start; display: flex; }
.wctl span { height: 19px; border: 1px solid #65757b; border-width: 0 0 1px 1px; display: flex; align-items: center; justify-content: center; }
.wctl span:last-child { border-right-width: 1px; }
.w27 { width: 27px; } .w26 { width: 26px; } .w44 { width: 45px; }
.nav { height: 38px; background: #f8f8fa; display: flex; align-items: center; }
.back { width: 33px; height: 33px; margin-left: 3px; border: 1px solid #ccc; border-radius: 50%; display: flex; align-items: center; justify-content: center; background: #fbfbfb; }
.fwd { margin-left: 7px; } .reload { margin-left: 14px; } .home { margin-left: 15px; }
.url { width: 1138px; height: 29px; margin-left: 121px; background: #fff; border: 1px solid #bbb; border-radius: 2px; display: flex; align-items: center; padding-left: 8px; box-shadow: 0 1px 2px #0001; }
.url p { margin-left: 10px; font-size: 13.800px; letter-spacing: -.03px; color: #777; width: 965px; white-space: nowrap; }
.url b { font-weight: 400; color: #111; }
.pill { width: 40px; height: 18px; margin-left: 12px; border: 1px solid #ccc; border-radius: 9px; background: #eee; font-size: 11px; line-height: 16px; text-align: center; }
.vline { width: 1px; height: 21px; background: #ddd; margin-left: 12px; }
.vline.tall { height: 33px; margin: 0; }
.dots { margin: 0 12px 0 11px; fill: #555; }
.tools { margin-left: 121px; display: flex; align-items: center; }
.tools svg + svg { margin-left: 15px; }
.tools .vline { margin: 0 13px 0 10px; }
.marks { height: 24px; background: #f8f8fa; border-bottom: 1px solid #d4d4d6; display: flex; align-items: center; padding: 0 12px 1px 12px; font-size: 11.700px; }
.marks span { margin-left: 5px; white-space: nowrap; }
.marks .m1 { margin-right: 11px; } .marks .m2 { margin: 0 11px 0 3px; }
.marks .m4 { margin: 0 11px 0 3px; }
.marks .m3 { margin-left: 3px; }
.marks .jd { background: #d0111c; color: #fff; width: 16px; height: 15px; margin-left: 0; text-align: center; line-height: 15px; font-size: 10.500px; font-weight: 600; }
.marks .phone { margin-left: auto; }
.marks .phone + span { margin-left: 3px; }

/* map page */
.page { flex: 1; display: flex; align-items: flex-start; padding-left: 383px; }
.map use { stroke-linejoin: round; }
.road-edge { fill: none; stroke: #e5e4e1; stroke-width: 8px; }
.road-core { fill: none; stroke: #fff; stroke-width: 5px; }
.rail-bed { fill: none; stroke: #e9e9e7; stroke-width: 12px; }
.rail-dash { fill: none; stroke: #949494; stroke-width: 4px; stroke-dasharray: 30 16; }
.ring-edge { fill: none; stroke: #f3d99a; stroke-width: 24px; }
.ring-core { fill: none; stroke: #fee8ab; stroke-width: 19px; }
.hw-edge { fill: none; stroke: #f1b244; stroke-width: 31px; }
.hw-core { fill: none; stroke: #fdca55; stroke-width: 26px; }
.lbl { font-size: 25px; fill: #4b4042; stroke: #fff; stroke-width: 3px; paint-order: stroke; }
.village { fill: #6b6c10; }
.street { font-size: 31px; fill: #333; letter-spacing: 2px; }
.small { font-size: 8.300px; stroke-width: 1px; }
.shield { font-size: 20px; fill: #fff; text-anchor: middle; }
.copy { font: 10.200px "Liberation Sans", "Noto Sans CJK SC", sans-serif; fill: #111; }
.mt { font: 700 9.500px "Noto Sans CJK SC", sans-serif; fill: #222; }
.mt.on { fill: #fff; }
.panel { margin-left: 23px; width: 171px; font-size: 12.300px; color: #212529; }
.panel label { display: block; white-space: nowrap; }
.l1 { height: 19px; line-height: 20px; }
.sel { width: 171px; height: 29.500px; background: #f8f8fa; border-radius: 3px; display: flex; align-items: center; justify-content: space-between; padding: 0 10px; color: #111; }
.sel i { border: 3px solid transparent; border-top-color: #111; border-bottom: 0; }
.sel.off { color: #888; height: 30px; } .sel.off i { border-top-color: #888; }
.l2 { height: 18.500px; line-height: 20px; }
.row { display: flex; }
.row label { width: 40px; line-height: 22px; }
.inp { height: 30px; background: #fff; border: 1px solid #ced4da; border-radius: 3px; padding: 0 10px; line-height: 29px; color: #495057; }
.short { width: 84px; }
.wide { width: 124px; } .wide span { display: block; overflow: hidden; white-space: nowrap; width: 102px; font-size: 11.400px; }
.q { width: 79px; border-radius: 3px 0 0 3px; }
.btn { width: 45px; height: 29px; line-height: 29px; background: #f0f0f0; text-align: center; color: #111; border-radius: 0 3px 3px 0; }
.teal { width: 69px; height: 29px; margin-bottom: 1px; background: #17a2b8; border-radius: 3px; }
.session { position: absolute; left: 1038px; top: -1px; width: 50px; height: 18px; background: #f1f1f1; display: flex; align-items: center; justify-content: space-between; padding-right: 2px; }
.grip { width: 13px; height: 18px; background: conic-gradient(#ccc 25%, #fff 0 50%, #ccc 0 75%, #ccc 0) 1px 1px / 4px 4px; }

/* explorer */
.explorer { position: absolute; left: 164px; top: 279px; width: 1017px; height: 636px; border: 1px solid #23333b; background: #66c9ea; padding: 0 6px 7px; display: flex; flex-direction: column; }
.titlebar { position: relative; height: 28px; display: flex; align-items: center; }
.tsep { width: 1px; height: 11px; background: #7199a8; margin-left: 8px; }
.chk { margin-left: 9px; } .f2 { margin-left: 6px; } .drop { margin: 2px 0 0 7px; } .t2 { margin-left: 9px; }
.titlebar h1 { position: absolute; left: 0; right: 0; text-align: center; font-size: 15px; font-weight: 400; padding: 0 5px 2px 0; letter-spacing: -.2px; }
.ectl { position: absolute; right: -3px; top: 0; display: flex; border: 1px solid #222; border-top: 0; height: 20px; }
.ectl span { display: flex; align-items: center; justify-content: center; border-right: 1px solid #222; }
.ectl span:last-child { border: 0; background: #c35a4f; }
.w28 { width: 27px; } .w25 { width: 25px; } .w45 { width: 45px; }
.body { flex: 1; background: #fdfdfd; border: 1px solid #a8d5e5; border-top-color: #62a2b9; border-left: 0; display: flex; flex-direction: column; }
.ribbon { height: 26px; border-bottom: 1px solid #dcdcdc; display: flex; align-items: center; font-size: 11.700px; color: #444; }
.ribbon span { margin-right: 28px; }
.ribbon .file { width: 55px; height: 22px; align-self: flex-start; background: #1979ca; color: #fff; text-align: center; line-height: 22px; margin-right: 14px; }
.rch { margin-left: auto; }
.help { width: 14px; height: 14px; border-radius: 50%; background: #1979ca; color: #fff; text-align: center; line-height: 14px; font-size: 11px; margin: 0 3px 0 10px; }
.address { height: 35px; display: flex; align-items: center; padding: 0 0 1px 10px; }
.fw { margin-left: 9px; } .dd { margin-left: 9px; } .up { margin-left: 14px; }
.crumbs { width: 680px; height: 24px; margin-left: 6px; border: 1px solid #6b6b6b; display: flex; align-items: center; padding: 0 7px 0 3px; background: #fff; }
.crumbs span { white-space: nowrap; font-size: 12.200px; color: #222; }
.crumbs .cn { font-size: 11.800px; }
.crumbs i { width: 24.400px; padding-left: 11px; flex: none; }
.crumbs svg + i { width: 23px; padding-left: 10px; }
.crumbs .cn + i { width: 23.600px; }
.crumbs i::before { content: ""; display: block; width: 0; border: 4px solid transparent; border-left: 4.500px solid #111; border-right: 0; }
.cch { margin: 0 14px 0 auto; }
.search { width: 198px; height: 23px; margin-left: 9px; border: 1px solid #6b6b6b; display: flex; align-items: center; justify-content: space-between; padding: 0 9px; color: #777; background: #fff; }
.panes { flex: 1; display: flex; min-height: 0; }
.tree { width: 154px; border-right: 1px solid #ececf0; padding: 10px 1px 0; font-size: 11.700px; color: #111; }
.tree li { height: 22.280px; display: flex; align-items: center; padding-left: 8px; border: 1px solid transparent; white-space: nowrap; }
.tree .a { width: 8px; height: 10px; margin-right: 3px; }
.tree .i { width: 15px; height: 15px; margin-right: 5px; }
.tree .s { padding-left: 29px; }
.tree .s:has(.a) { padding-left: 19px; }
.tree .s .a { margin-right: 2px; }
.tree .fav { background: #f6faff; border-color: #bcd8f2; }
.tree .cur { background: #f1f1f1; border-color: #d6d6d6; }
.files { padding: 2px 0 0 2px; }
.r { display: grid; grid-template-columns: 249px 117px 109px 71px; width: 557px; height: 20.380px; align-items: center; padding-left: 5px; border: 1px solid transparent; white-space: nowrap; color: #666; }
.head { position: relative; width: 574px; height: 25px; border: 1px solid #dcdcdc; border-left: 0; padding: 0; grid-template-columns: 264px 116px 116px 77px; font-size: 11.700px; color: #56688a; }
.head span { height: 23px; line-height: 23px; padding-left: 6px; border-right: 1px solid #dcdcdc; }
.head span:first-child { padding-left: 17px; }
.head span:last-of-type { border: 0; }
.sort { position: absolute; left: 133px; top: 0; border: 4px solid transparent; border-top: 0; border-bottom-color: #41598a; }
.list { padding: 7px 0 0 14px; }
.list .r span { display: flex; align-items: center; }
.list .r span:first-child { color: #111; }
.list .r span:nth-child(3) { font-size: 11.800px; }
.list .r span:last-child { justify-content: flex-end; font-size: 12px; }
.list svg { width: 15px; height: 15px; margin: 0 4px 0 -2px; }
.list .on { background: #cde1fb; border-color: #6e9dd3; }
.status { height: 24px; display: flex; align-items: center; padding: 0 8px 0 14px; color: #1e3766; }
.status .s1 { width: 63px; border-right: 1px solid #e5e5e5; white-space: nowrap; padding-top: 1px; }
.status .s2 { width: 94px; padding: 1px 0 0 10px; border-right: 1px solid #e5e5e5; white-space: nowrap; }
.view { margin-left: auto; width: 22px; height: 23px; background: #c2e4f6; border: 1px solid #4f86a5; display: flex; align-items: center; justify-content: center; }
.thumb { margin-left: 4px; }
.status .view { margin-right: 0; }
.status { padding-right: 6px; padding-top: 1px; }
.sidetab { position: absolute; left: 1603px; top: 856px; }

/* input method bar */
.ime { position: absolute; right: 0; top: 956px; height: 22px; width: 184px; background: #fff; border-top: 1px solid #aaa; display: flex; align-items: center; gap: 7.500px; padding: 0; }
.ime .big { margin: -6px -3px 0 -15px; }
.ime b { color: #1b73c9; font-size: 13.500px; }
.ime svg:nth-of-type(2) { margin-left: 1px; margin-right: 1px; }

/* taskbar */
.taskbar { height: 38px; background: #66c9ea; border-top: 1px solid #777; display: flex; align-items: stretch; }
.t { width: 57px; margin-right: 3px; border: 1px solid #4a93ae; border-width: 0 1px; background: #74cdeb; display: flex; align-items: center; justify-content: center; }
.plain { border: 0; background: none; margin: 0; }
.p1 { width: 50px; padding-right: 2px; } .p2 { width: 56px; } .p3 { width: 64px; }
.act { background: linear-gradient(135deg, #e6e6c4, #f3ecc8 50%, #dfe6cc); border-color: #c4c99e; }
.narrow { width: 53px; padding-right: 2px; }
.edge { width: 4px; margin-right: 0; border-left: 0; border-right: 0; }
.cmd { font: 700 8px "Liberation Mono", monospace; fill: #fff; }
.tray { margin-left: auto; display: flex; align-items: center; padding-right: 15px; gap: 8px; }
.tray > svg:first-child { margin-right: 4px; }
.tray b { color: #fff; font-size: 14px; text-shadow: 0 0 1px #345, 0 0 1px #345; margin: 0 5px 0 3px; }
.clock { width: 58px; margin-left: 8px; text-align: center; line-height: 17.500px; }
.clock span { display: block; }

/* network meter */
.meter { position: absolute; left: 1771px; top: 846px; width: 118px; height: 58px; display: flex; align-items: center; }
.rates { width: 88px; height: 40px; background: #1d212a; border-radius: 20px 0 0 20px; box-shadow: 0 0 3px #0008; color: #888; }
.rates p { height: 20px; display: flex; align-items: center; padding-left: 11px; font-size: 10.500px; }
.rates p + p { border-top: 1px solid #292e38; }
.rates b { margin-left: 5px; width: 16px; font-size: 11px; font-weight: 400; color: #eee; }
.dial { position: relative; margin-left: -28px; width: 58px; height: 58px; border-radius: 50%; background: radial-gradient(#2b3040, #363c4b); box-shadow: 0 0 2px #555b68; flex: none; }
.dial span { position: absolute; left: 12px; top: 15px; color: #e8e8ea; font: 300 24px/26px "Open Sans", sans-serif; letter-spacing: -.3px; white-space: nowrap; }
.dial small { font-size: 10px; }
```
